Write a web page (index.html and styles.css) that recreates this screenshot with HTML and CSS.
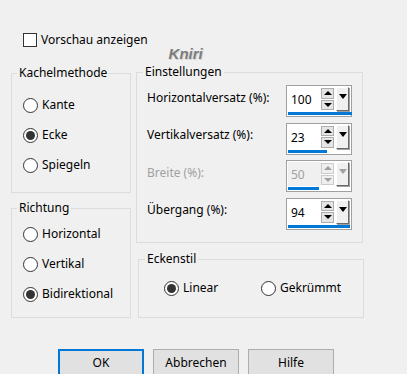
FILE: index.html
```html
<!DOCTYPE html>
<html lang="de">
<head>
  <meta charset="UTF-8" />
  <title>Kachel-Effekt</title>
  <link rel="stylesheet" href="styles.css">
</head>
<body>
  <div class="dialog">
    <div class="top">
      <label class="check"><input type="checkbox" /> Vorschau anzeigen</label>
      <span class="brand">Kniri</span>
    </div>

    <div class="main">
      <div class="col left">
        <fieldset class="group method">
          <legend>Kachelmethode</legend>
          <label class="opt"><input type="radio" name="method" /> Kante</label>
          <label class="opt"><input type="radio" name="method" checked /> Ecke</label>
          <label class="opt"><input type="radio" name="method" /> Spiegeln</label>
        </fieldset>
        <fieldset class="group direction">
          <legend>Richtung</legend>
          <label class="opt"><input type="radio" name="dir" /> Horizontal</label>
          <label class="opt"><input type="radio" name="dir" /> Vertikal</label>
          <label class="opt"><input type="radio" name="dir" checked /> Bidirektional</label>
        </fieldset>
      </div>

      <div class="col right">
        <fieldset class="group settings">
          <legend>Einstellungen</legend>
          <div class="row">
            <span>Horizontalversatz (%):</span>
            <div class="spin">
              <div class="spin-body">
                <span class="spin-field">100</span>
                <span class="steps"><i class="step up"></i><i class="step down"></i></span>
                <span class="drop"></span>
              </div>
              <div class="bar" style="width:64px"></div>
            </div>
          </div>
          <div class="row">
            <span>Vertikalversatz (%):</span>
            <div class="spin">
              <div class="spin-body">
                <span class="spin-field">23</span>
                <span class="steps"><i class="step up"></i><i class="step down"></i></span>
                <span class="drop"></span>
              </div>
              <div class="bar" style="width:39px"></div>
            </div>
          </div>
          <div class="row disabled">
            <span>Breite (%):</span>
            <div class="spin">
              <div class="spin-body">
                <span class="spin-field">50</span>
                <span class="steps"><i class="step up"></i><i class="step down"></i></span>
                <span class="drop"></span>
              </div>
              <div class="bar" style="width:31px"></div>
            </div>
          </div>
          <div class="row">
            <span>Übergang (%):</span>
            <div class="spin">
              <div class="spin-body">
                <span class="spin-field">94</span>
                <span class="steps"><i class="step up"></i><i class="step down"></i></span>
                <span class="drop"></span>
              </div>
              <div class="bar" style="width:62px"></div>
            </div>
          </div>
        </fieldset>
        <fieldset class="group corner">
          <legend>Eckenstil</legend>
          <div class="inline">
            <label class="opt wide"><input type="radio" name="corner" checked /> Linear</label>
            <label class="opt"><input type="radio" name="corner" /> Gekrümmt</label>
          </div>
        </fieldset>
      </div>
    </div>

    <div class="buttons">
      <button class="btn default">OK</button>
      <button class="btn">Abbrechen</button>
      <button class="btn">Hilfe</button>
    </div>
  </div>
</body>
</html>
```

FILE: styles.css
```css
body {
  margin:0;
  background:#f0f0f0;
  font-family:"Noto Sans", sans-serif;
  font-size:12px;
  color:#000;
}
.dialog {
  width:407px;
  height:374px;
  overflow:hidden;
}

/* top line */
.top {
  display:flex;
  align-items:flex-start;
  height:31px;
  padding:33px 0 0 23px;
}
.check {
  display:flex;
  align-items:center;
  gap:4px;
  height:14px;
  line-height:16px;
}
.check input {
  appearance:none;
  margin:0;
  width:14px;
  height:14px;
  border:1px solid #333;
  background:#fff;
}
.brand {
  margin:13px 0 0 21px;
  font-family:"Liberation Sans", sans-serif;
  font-style:italic;
  font-weight:bold;
  font-size:15px;
  line-height:16px;
  color:#7c7c7c;
  text-shadow:1px 1px 0 #d4d4d4;
}

/* group boxes */
.main {
  display:flex;
  gap:5px;
  padding-left:11px;
}
.col {
  display:flex;
  flex-direction:column;
}
.group {
  margin:0;
  padding:0;
  border:1px solid #dcdcdc;
  box-sizing:border-box;
}
.group legend {
  margin-left:5px;
  padding:0 2px;
  line-height:16px;
}
.left { width:120px; }
.right { width:227px; }
.method {
  margin-top:1px;
  height:128px;
  padding-top:16px;
}
.direction {
  margin-top:7px;
  height:118px;
  padding-top:10px;
}
.method, .direction {
  display:flex;
  flex-direction:column;
  gap:14px;
}
.method .opt, .direction .opt { margin-left:11px; }
.settings {
  height:179px;
  padding-top:5px;
  display:flex;
  flex-direction:column;
  gap:5.5px;
}
.settings legend, .corner legend { margin-left:6px; }
.corner {
  margin:8px 0 0 2px;
  width:226px;
  height:67px;
  padding-top:13px;
}

/* radio buttons */
.opt {
  display:flex;
  align-items:center;
  gap:4px;
  height:16px;
  line-height:16px;
}
.opt input {
  appearance:none;
  margin:0;
  width:15px;
  height:15px;
  border:1px solid #333;
  border-radius:50%;
  background:#fff;
  display:grid;
  place-content:center;
}
.opt input:checked::before {
  content:"";
  width:9px;
  height:9px;
  border-radius:50%;
  background:#333;
}
.inline {
  display:flex;
  padding-left:25px;
}
.wide { width:97px; }

/* spin boxes */
.row {
  display:flex;
  align-items:center;
  justify-content:space-between;
  height:32px;
  margin:0 10px;
}
.row > span { margin-top:-8px; }
.spin {
  width:66px;
  height:32px;
  box-sizing:border-box;
  border:1px solid #a0a0a0;
  background:#fff;
  padding:1px;
  display:flex;
  flex-direction:column;
}
.spin-body {
  flex:1;
  display:flex;
}
.spin-field {
  flex:1;
  padding:1px 0 0 3px;
  display:flex;
  align-items:center;
}
.steps {
  width:13px;
  display:flex;
  flex-direction:column;
  gap:1px;
  padding:1px 0;
  margin-right:2px;
}
.step {
  flex:1;
  border:1px solid #adadad;
  background:#e5e5e5;
  display:flex;
  align-items:center;
  justify-content:center;
}
.step::before {
  content:"";
  border-left:4px solid transparent;
  border-right:4px solid transparent;
}
.up::before { border-bottom:4px solid #000; }
.down::before { border-top:4px solid #000; }
.drop {
  width:13px;
  margin-right:1px;
  box-sizing:border-box;
  border:1px solid;
  border-color:#fff #696969 #696969 #fff;
  box-shadow:1px 1px 0 #a0a0a0;
  background:#f0f0f0;
  display:flex;
  justify-content:center;
  padding-top:6px;
}
.drop::before {
  content:"";
  height:0;
  border-left:4px solid transparent;
  border-right:4px solid transparent;
  border-top:5px solid #000;
}
.bar {
  height:3px;
  margin-top:1px;
  background:#0078d7;
}
.disabled { color:#a0a0a0; }
.disabled .spin-field { background:#f0f0f0; }
.disabled .step { border-color:#cccccc; background:#efefef; }
.disabled .up::before { border-bottom-color:#a0a0a0; }
.disabled .down::before { border-top-color:#a0a0a0; }
.disabled .drop::before { border-top-color:#a0a0a0; }

/* dialog buttons */
.buttons {
  display:flex;
  gap:9px;
  padding-left:58px;
  margin-top:31px;
}
.btn {
  width:86px;
  height:27px;
  padding:0;
  border:1px solid #adadad;
  background:#e1e1e1;
  font-family:"Noto Sans", sans-serif;
  font-size:12px;
  color:#000;
}
.btn.default { border:2px solid #0078d7; }
```
